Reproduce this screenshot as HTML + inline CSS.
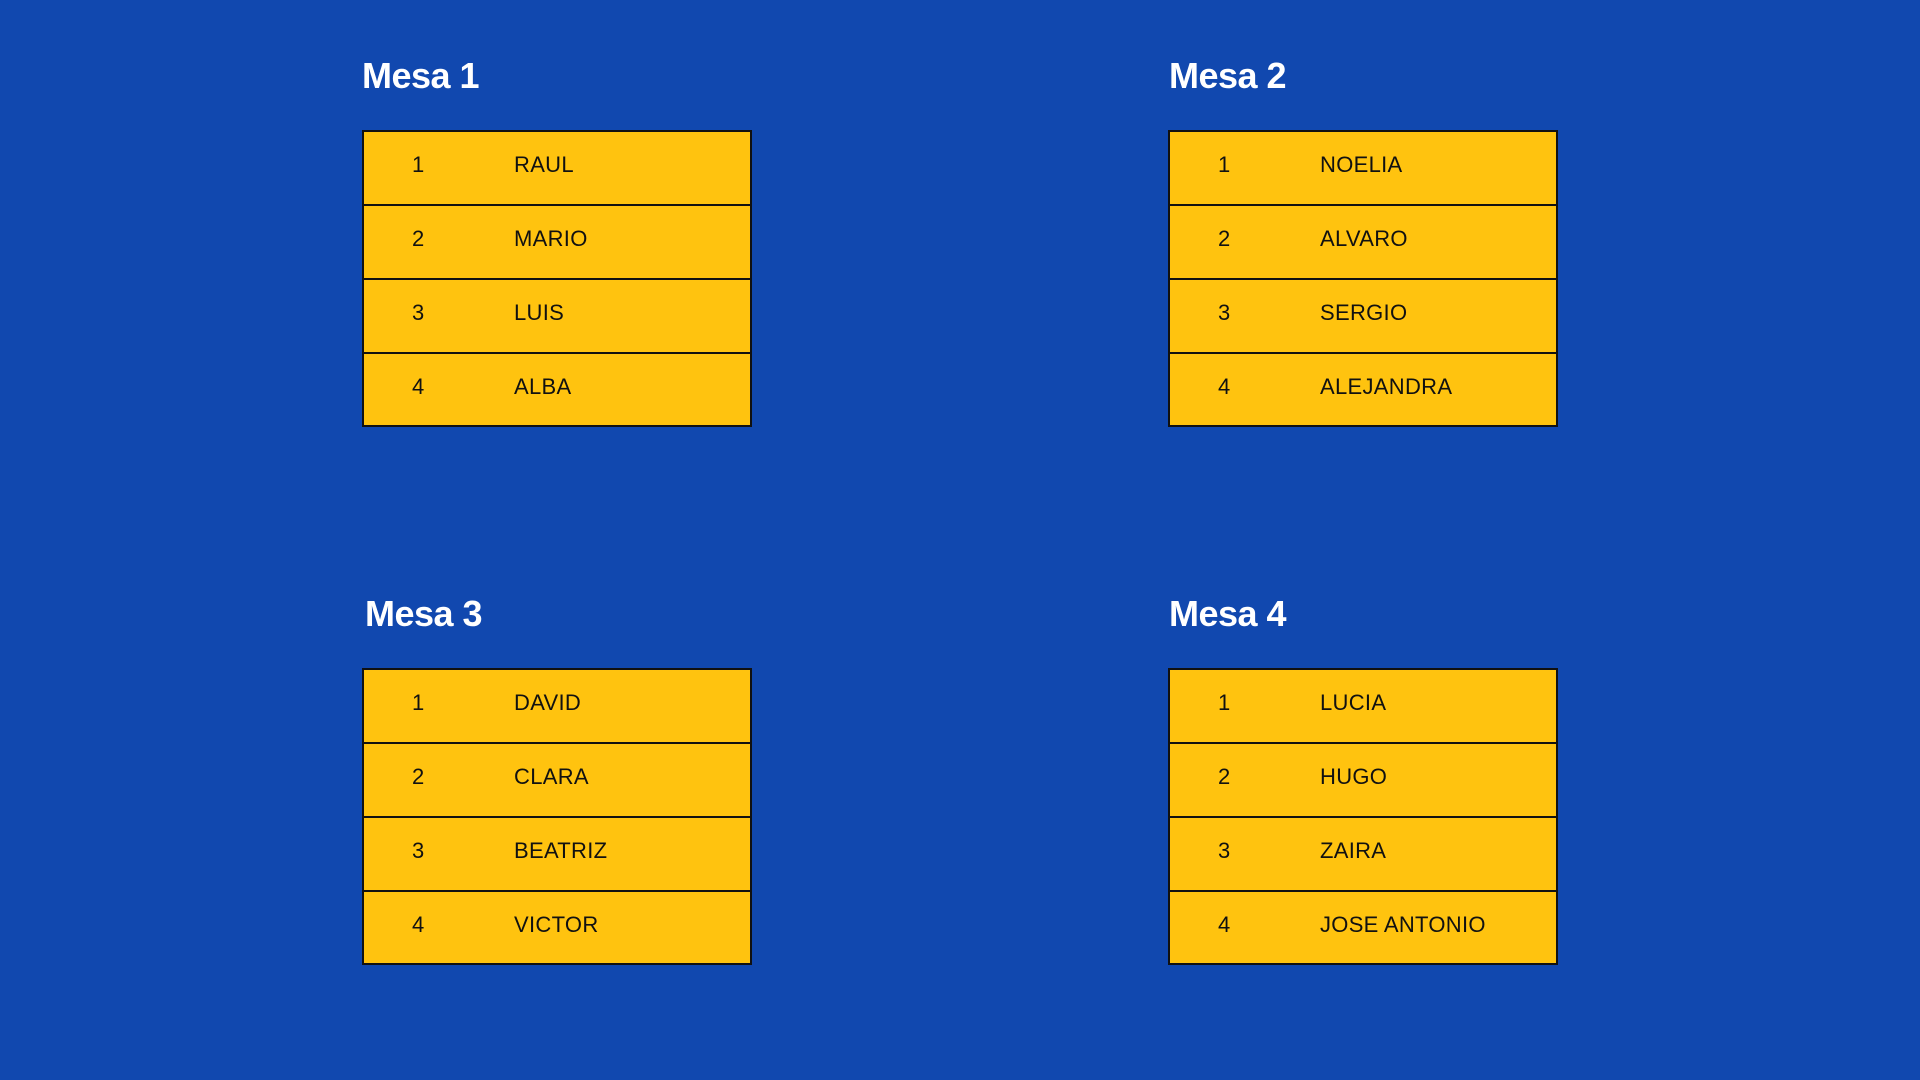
<!DOCTYPE html>
<html><head><meta charset="utf-8"><style>
html,body{margin:0;padding:0}
body{width:1920px;height:1080px;background:#1148AF;position:relative;overflow:hidden;font-family:"Liberation Sans",sans-serif}
.t{position:absolute;color:#fff;font-weight:bold;font-size:36px;line-height:36px;letter-spacing:-0.5px}
.tb{position:absolute;width:386px;height:293px;background:#FFC30F;border:2px solid #111}
.r{position:absolute;left:0;width:386px;height:74px}
.r+.r{border-top:2px solid #111}
.n,.m{position:absolute;font-size:22px;line-height:22px;color:#111;top:22px}
.n{left:48px}.m{left:150px;letter-spacing:0.3px}
</style></head><body>
<div class="t" style="left:362px;top:58px">Mesa 1</div>
<div class="t" style="left:1169px;top:58px">Mesa 2</div>
<div class="t" style="left:365px;top:596px">Mesa 3</div>
<div class="t" style="left:1169px;top:596px">Mesa 4</div>

<div class="tb" style="left:362px;top:130px">
<div class="r" style="top:0"><span class="n">1</span><span class="m">RAUL</span></div>
<div class="r" style="top:72px"><span class="n">2</span><span class="m">MARIO</span></div>
<div class="r" style="top:146px"><span class="n">3</span><span class="m">LUIS</span></div>
<div class="r" style="top:220px"><span class="n">4</span><span class="m">ALBA</span></div>
</div>
<div class="tb" style="left:1168px;top:130px">
<div class="r" style="top:0"><span class="n">1</span><span class="m">NOELIA</span></div>
<div class="r" style="top:72px"><span class="n">2</span><span class="m">ALVARO</span></div>
<div class="r" style="top:146px"><span class="n">3</span><span class="m">SERGIO</span></div>
<div class="r" style="top:220px"><span class="n">4</span><span class="m">ALEJANDRA</span></div>
</div>
<div class="tb" style="left:362px;top:668px">
<div class="r" style="top:0"><span class="n">1</span><span class="m">DAVID</span></div>
<div class="r" style="top:72px"><span class="n">2</span><span class="m">CLARA</span></div>
<div class="r" style="top:146px"><span class="n">3</span><span class="m">BEATRIZ</span></div>
<div class="r" style="top:220px"><span class="n">4</span><span class="m">VICTOR</span></div>
</div>
<div class="tb" style="left:1168px;top:668px">
<div class="r" style="top:0"><span class="n">1</span><span class="m">LUCIA</span></div>
<div class="r" style="top:72px"><span class="n">2</span><span class="m">HUGO</span></div>
<div class="r" style="top:146px"><span class="n">3</span><span class="m">ZAIRA</span></div>
<div class="r" style="top:220px"><span class="n">4</span><span class="m">JOSE ANTONIO</span></div>
</div>
</body></html>
